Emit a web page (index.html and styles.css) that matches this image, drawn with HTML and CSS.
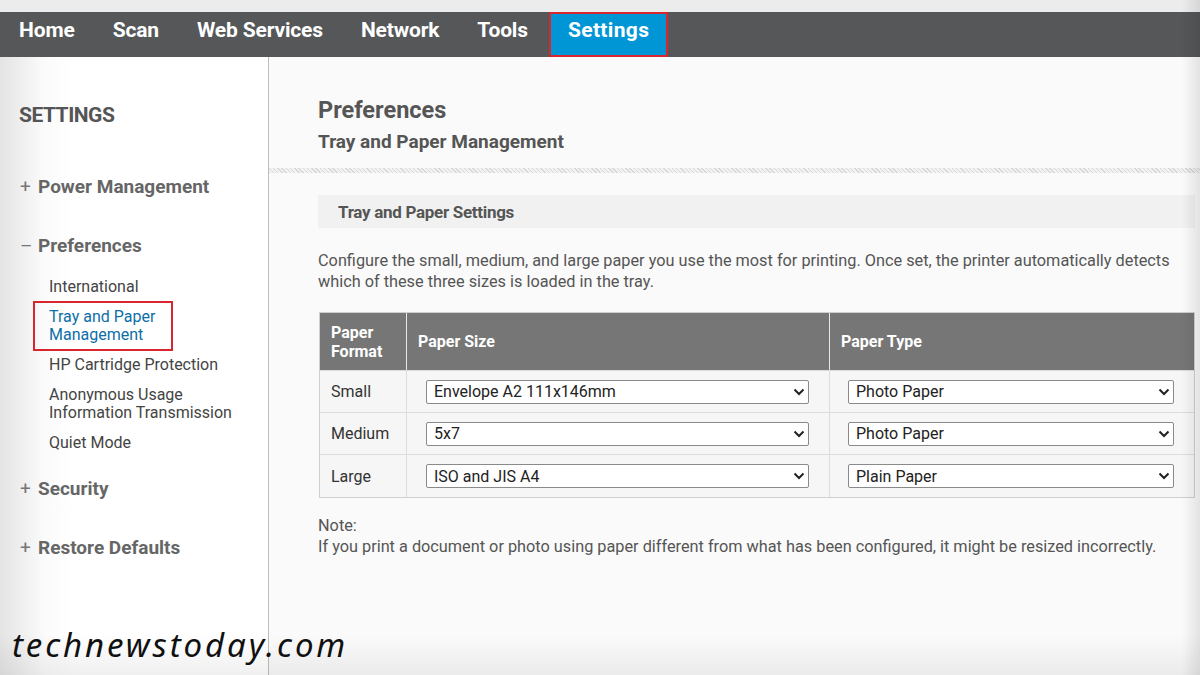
FILE: index.html
```html
<!DOCTYPE html>
<html lang="en">
<head>
    <link rel="stylesheet" href="styles.css">
</head>
<body>
    <div class="strip"></div>
    <div class="topnav">
        <div class="tab">Home</div>
        <div class="tab">Scan</div>
        <div class="tab">Web Services</div>
        <div class="tab">Network</div>
        <div class="tab">Tools</div>
        <div class="tab active">Settings</div>
    </div>

    <div class="layout">
        <div class="sidebar">
            <div class="side-title">SETTINGS</div>
            <div class="group"><span class="sign">+</span>Power Management</div>
            <div class="group open"><span class="sign">&ndash;</span>Preferences</div>
            <div class="sub">
                <div class="item">International</div>
                <div class="item current">Tray and Paper<br>Management</div>
                <div class="item">HP Cartridge Protection</div>
                <div class="item">Anonymous Usage<br>Information Transmission</div>
                <div class="item">Quiet Mode</div>
            </div>
            <div class="group"><span class="sign">+</span>Security</div>
            <div class="group"><span class="sign">+</span>Restore Defaults</div>
        </div>

        <div class="content">
            <div class="page-head">
                <div class="h1">Preferences</div>
                <div class="h2">Tray and Paper Management</div>
            </div>
            <div class="hatch"></div>
            <div class="body">
                <div class="section">Tray and Paper Settings</div>
                <p class="intro">Configure the small, medium, and large paper you use the most for printing. Once set, the printer automatically detects which of these three sizes is loaded in the tray.</p>

                <div class="table">
                    <div class="th c1">Paper<br>Format</div>
                    <div class="th c2">Paper Size</div>
                    <div class="th c3">Paper Type</div>

                    <div class="td c1">Small</div>
                    <div class="td c2"><div class="select"><span>Envelope A2 111x146mm</span><svg viewBox="0 0 12 8" width="12" height="8"><path d="M1.5 1.5 6 6l4.5-4.5" fill="none" stroke="#222" stroke-width="2"/></svg></div></div>
                    <div class="td c3"><div class="select"><span>Photo Paper</span><svg viewBox="0 0 12 8" width="12" height="8"><path d="M1.5 1.5 6 6l4.5-4.5" fill="none" stroke="#222" stroke-width="2"/></svg></div></div>

                    <div class="td c1">Medium</div>
                    <div class="td c2"><div class="select"><span>5x7</span><svg viewBox="0 0 12 8" width="12" height="8"><path d="M1.5 1.5 6 6l4.5-4.5" fill="none" stroke="#222" stroke-width="2"/></svg></div></div>
                    <div class="td c3"><div class="select"><span>Photo Paper</span><svg viewBox="0 0 12 8" width="12" height="8"><path d="M1.5 1.5 6 6l4.5-4.5" fill="none" stroke="#222" stroke-width="2"/></svg></div></div>

                    <div class="td c1">Large</div>
                    <div class="td c2"><div class="select"><span>ISO and JIS A4</span><svg viewBox="0 0 12 8" width="12" height="8"><path d="M1.5 1.5 6 6l4.5-4.5" fill="none" stroke="#222" stroke-width="2"/></svg></div></div>
                    <div class="td c3"><div class="select"><span>Plain Paper</span><svg viewBox="0 0 12 8" width="12" height="8"><path d="M1.5 1.5 6 6l4.5-4.5" fill="none" stroke="#222" stroke-width="2"/></svg></div></div>
                </div>

                <p class="note">Note:<br>If you print a document or photo using paper different from what has been configured, it might be resized incorrectly.</p>
            </div>
        </div>
    </div>

    <div class="watermark">technewstoday.com</div>
    <div class="vignette"></div>
</body>
</html>
```

FILE: styles.css
```css
body {
    margin: 0;
    background: #fafafa;
    font-family: Roboto, "Liberation Sans", sans-serif;
    color: #444;
    overflow: hidden;
}

.strip {
    height: 12px;
    background: #ececec;
}

.topnav {
    display: flex;
    height: 45px;
    background: #555759;
}

.tab {
    padding: 0 19px;
    line-height: 36px;
    font-size: 21px;
    font-weight: bold;
    color: #fff;
    letter-spacing: -0.15px;
}

.tab.active {
    background: #0096d6;
    margin-left: 2px;
    padding: 0 17px;
    border: 2px solid #d8262e;
    line-height: 32px;
    letter-spacing: 0.35px;
}

.layout {
    display: flex;
    height: 618px;
}

.sidebar {
    width: 269px;
    flex-shrink: 0;
    border-right: 1px solid #bdbdbd;
    background: linear-gradient(to right, #e4e4e4, #fbfbfb 45px, #fff 80px);
    padding-top: 45px;
    box-sizing: border-box;
}

.side-title {
    padding-left: 19px;
    font-size: 21px;
    font-weight: bold;
    color: #555;
    line-height: 26px;
    letter-spacing: -0.5px;
}

.group {
    margin-top: 47px;
    padding-left: 20px;
    font-size: 19px;
    font-weight: bold;
    color: #666;
    line-height: 24px;
}

.group + .group {
    margin-top: 35px;
}

.sub + .group {
    margin-top: 25px;
}

.sign {
    display: inline-block;
    width: 18px;
    font-weight: normal;
    color: #777;
}

.sub {
    padding-left: 49px;
    margin-top: 20px;
}

.item {
    font-size: 16px;
    line-height: 18px;
    color: #444;
    margin-bottom: 12px;
}

.item.current {
    color: #0d6ea8;
    position: relative;
}

.item.current::after {
    content: "";
    position: absolute;
    left: -16px;
    top: -7px;
    width: 136px;
    height: 46px;
    border: 2px solid #d8262e;
}

.content {
    flex: 1;
}

.page-head {
    padding: 39px 0 0 49px;
    height: 72px;
}

.h1 {
    font-size: 23.5px;
    font-weight: bold;
    color: #555;
    line-height: 28px;
}

.h2 {
    margin-top: 6px;
    font-size: 19px;
    font-weight: bold;
    color: #555;
    line-height: 24px;
}

.hatch {
    height: 5px;
    background: repeating-linear-gradient(45deg, #d8d8d8 0 1px, #f2f2f2 1px 3px);
}

.body {
    padding: 22px 5px 0 49px;
}

.section {
    height: 33px;
    line-height: 35px;
    padding-left: 20px;
    background: #f1f1f1;
    font-size: 17px;
    font-weight: bold;
    color: #555;
    letter-spacing: -0.3px;
}

.intro {
    margin: 22px 0 0;
    font-size: 16.3px;
    line-height: 21px;
    color: #555;
}

.table {
    display: grid;
    grid-template-columns: 87px 423px 1fr;
    grid-template-rows: 57px 42px 42px 43px;
    margin-top: 20px;
    margin-left: 1px;
    border: 1px solid #cfcfcf;
    background: #f6f6f6;
}

.th {
    background: #767676;
    color: #fff;
    font-size: 16px;
    font-weight: bold;
    display: flex;
    align-items: center;
    padding-left: 11px;
    line-height: 19px;
    border-right: 1px solid #e8e8e8;
}

.th.c3 {
    border-right: 0;
}

.td {
    display: flex;
    align-items: center;
    border-top: 1px solid #dcdcdc;
    border-right: 1px solid #dcdcdc;
    font-size: 16px;
    color: #333;
}

.td.c1 {
    padding-left: 11px;
}

.td.c2 {
    padding: 0 20px 0 19px;
}

.td.c3 {
    padding: 0 20px 0 18px;
    border-right: 0;
}

.select {
    flex: 1;
    height: 24px;
    box-sizing: border-box;
    border: 1px solid #8a8a8a;
    border-radius: 2px;
    background: #fff;
    display: flex;
    align-items: center;
    justify-content: space-between;
    padding: 0 3px 0 7px;
    font-size: 16px;
    color: #222;
}

.note {
    margin: 17px 0 0;
    font-size: 16.3px;
    line-height: 21px;
    color: #555;
}

.watermark {
    position: absolute;
    left: 12px;
    top: 622px;
    font-family: "Noto Sans", sans-serif;
    font-style: italic;
    font-size: 33px;
    color: #111;
    letter-spacing: 2.9px;
}

.vignette {
    position: fixed;
    inset: 0;
    pointer-events: none;
    background:
        linear-gradient(to left, rgba(0, 0, 0, 0.09), rgba(0, 0, 0, 0) 18px),
        linear-gradient(to top, rgba(0, 0, 0, 0.06), rgba(0, 0, 0, 0) 40px);
}
```
